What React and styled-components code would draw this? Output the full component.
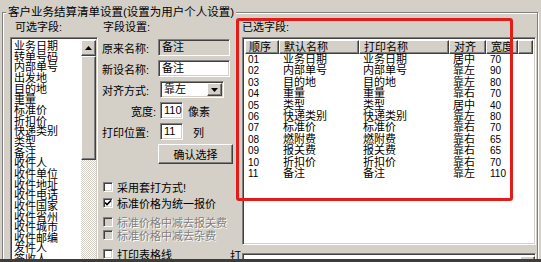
import styled, { createGlobalStyle, css } from 'styled-components';

const GlobalStyle = createGlobalStyle`
  html, body {
    margin: 0;
    padding: 0;
    background: #d4d0c8;
  }
  body {
    font-family: 'Liberation Sans', 'Noto Sans CJK SC', sans-serif;
    font-size: 11px;
    color: #000;
  }
`;

const sunken = css`
  box-sizing: border-box;
  border: 1px solid;
  border-color: #808080 #fff #fff #808080;
  box-shadow: inset 1px 1px 0 #404040, inset -1px -1px 0 #d4d0c8;
`;

const raised = css`
  box-sizing: border-box;
  border: 1px solid;
  border-color: #fff #404040 #404040 #fff;
  box-shadow: inset -1px -1px 0 #808080;
  background: #d4d0c8;
`;

const Window = styled.div`
  position: relative;
  width: 541px;
  height: 262px;
  box-sizing: border-box;
  padding: 5px 3px 0 2px;
  overflow: hidden;
  background: #d4d0c8;
  border-bottom: 3px solid #3c3c3c;
`;

const Group = styled.fieldset`
  margin: 0;
  min-width: 0;
  height: 300px;
  padding: 0 1px 0 7px;
  border: 1px solid #808080;
  box-shadow: inset 1px 1px 0 #fff, 1px 1px 0 #fff;
`;

const Legend = styled.legend`
  margin-left: -4px;
  padding: 0 2px;
  font-size: 11.5px;
  line-height: 14px;
  background: #d4d0c8;
`;

const Columns = styled.div`
  display: flex;
  align-items: flex-start;
`;

const LeftCol = styled.div`
  width: 88px;
  padding-top: 1px;
`;

const Caption = styled.div`
  line-height: 14px;
  padding-left: ${(p) => p.$indent || 0}px;
  margin-top: ${(p) => p.$mt || 0}px;
  white-space: nowrap;
`;

const ListBox = styled.div`
  ${sunken};
  display: flex;
  margin-top: 3px;
  height: 240px;
  padding: 2px 1px 2px 2px;
  background: #fff;
`;

const Items = styled.div`
  flex: 1;
  padding: 1px 0 0 1px;
  line-height: 10.65px;
  white-space: nowrap;
  overflow: hidden;
`;

const ScrollBar = styled.div`
  width: 15px;
  display: flex;
  flex-direction: column;
`;

const ScrollBtn = styled.div`
  ${raised};
  height: 16px;
  display: flex;
  align-items: center;
  justify-content: center;
`;

const Thumb = styled.div`
  ${raised};
  height: 104px;
`;

const Track = styled.div`
  flex: 1;
  background: repeating-conic-gradient(#d4d0c8 0 25%, #fff 0 50%) 0 0 / 2px 2px;
`;

const MidCol = styled.div`
  width: 128px;
  margin-left: 4px;
  padding-top: 1px;
`;

const Form = styled.div`
  margin-top: 5px;
  display: flex;
  flex-direction: column;
  gap: 4px;
`;

const FormRow = styled.div`
  display: flex;
  align-items: center;
  height: 17px;
  white-space: nowrap;
`;

const Label = styled.span`
  width: 58px;
  box-sizing: border-box;
  text-align: ${(p) => (p.$right ? 'right' : 'left')};
  padding-right: ${(p) => (p.$right ? 4 : 0)}px;
`;

const Field = styled.div`
  ${sunken};
  width: ${(p) => p.$w}px;
  height: 17px;
  flex: none;
  padding: 0 3px;
  line-height: 15px;
  background: ${(p) => (p.$readOnly ? '#d4d0c8' : '#fff')};
  display: flex;
  align-items: center;
  justify-content: space-between;
`;

const DropBtn = styled.div`
  ${raised};
  width: 15px;
  height: 13px;
  margin-right: -2px;
  display: flex;
  align-items: center;
  justify-content: center;
`;

const Unit = styled.span`
  margin-left: ${(p) => p.$gap}px;
`;

const Button = styled.div`
  ${raised};
  margin: 4px 0 0 56px;
  width: 75px;
  height: 20px;
  display: flex;
  align-items: center;
  justify-content: center;
`;

const CheckRow = styled.div`
  display: flex;
  align-items: center;
  height: 13px;
  margin-top: ${(p) => p.$mt}px;
  padding-left: 1px;
  white-space: nowrap;
  color: ${(p) => (p.$disabled ? '#808080' : '#000')};
  text-shadow: ${(p) => (p.$disabled ? '1px 1px 0 #fff' : 'none')};
`;

const Box = styled.span`
  ${sunken};
  width: 10px;
  height: 10px;
  margin-right: 4px;
  background: ${(p) => (p.$disabled ? '#d4d0c8' : '#fff')};
  display: flex;
  align-items: center;
  justify-content: center;
`;

const RightCol = styled.div`
  position: relative;
  flex: 1;
  padding-top: 1px;
  display: grid;
  grid-template-columns: 12px 1fr;
`;

const ListView = styled.div`
  ${sunken};
  grid-column: 2;
  margin-top: 3px;
  height: 208px;
  padding: 2px;
  background: #fff;
`;

const Row = styled.div`
  display: grid;
  grid-template-columns: 34px 80px 90px 37px 32px 1fr;
  height: ${(p) => (p.$head ? 14 : 11.4)}px;
  line-height: ${(p) => (p.$head ? 12 : 11.4)}px;
  white-space: nowrap;
`;

const HeadCell = styled.div`
  ${raised};
  padding-left: ${(p) => (p.$first ? 3 : 4)}px;
`;

const Cell = styled.div`
  padding-left: ${(p) => (p.$first ? 3 : 4)}px;
  font-size: ${(p) => (p.$num ? 10 : 11)}px;
`;

const Bottom = styled.div`
  grid-column: 1 / 3;
  display: grid;
  grid-template-columns: 12px 1fr;
  margin-top: 8px;
`;

const Combo = styled.div`
  ${sunken};
  height: 18px;
  background: #fff;
  display: flex;
  justify-content: flex-end;
  padding: 2px;
`;

const Mark = styled.div`
  position: absolute;
  left: 6px;
  top: -1px;
  width: 277px;
  height: 183px;
  box-sizing: border-box;
  border: 3px solid #e41c17;
  border-radius: 3px;
  pointer-events: none;
`;

const fields = [
  '业务日期', '转单号码', '内部单号', '出发地', '目的地', '重量', '标准价', '折扣价',
  '快递类别', '类型', '备注', '收件人', '收件单位', '收件地址', '收件电话', '收件国家',
  '收件省州', '收件城市', '收件邮编', '发件人', '签收人', '签收时间',
];

const selected = [
  ['01', '业务日期', '居中', '70'],
  ['02', '内部单号', '靠左', '90'],
  ['03', '目的地', '靠左', '80'],
  ['04', '重量', '靠右', '70'],
  ['05', '类型', '居中', '40'],
  ['06', '快递类别', '靠左', '80'],
  ['07', '标准价', '靠右', '70'],
  ['08', '燃附费', '靠右', '65'],
  ['09', '报关费', '靠右', '65'],
  ['10', '折扣价', '靠右', '70'],
  ['11', '备注', '靠左', '110'],
];

const checks = [
  { text: '采用套打方式!', mt: 16 },
  { text: '标准价格为统一报价', mt: 3, checked: true },
  { text: '标准价格中减去报关费', mt: 6, disabled: true },
  { text: '标准价格中减去杂费', mt: 0, disabled: true },
  { text: '打印表格线', mt: 6 },
];

const Arrow = ({ up }) => (
  <svg width="7" height="4" viewBox="0 0 7 4">
    <path d={up ? 'M3.5 0 L7 4 L0 4 Z' : 'M0 0 L7 0 L3.5 4 Z'} fill="#000" />
  </svg>
);

const Tick = () => (
  <svg width="8" height="8" viewBox="0 0 8 8">
    <path d="M1 3.5 L3 5.5 L7 1.5" fill="none" stroke="#000" strokeWidth="1.6" />
  </svg>
);

export default function App() {
  return (
    <>
      <GlobalStyle />
      <Window>
        <Group>
          <Legend>客户业务结算清单设置(设置为用户个人设置)</Legend>
          <Columns>
            <LeftCol>
              <Caption $indent={5}>可选字段:</Caption>
              <ListBox>
                <Items>
                  {fields.map((f) => (
                    <div key={f}>{f}</div>
                  ))}
                </Items>
                <ScrollBar>
                  <ScrollBtn>
                    <Arrow up />
                  </ScrollBtn>
                  <Thumb />
                  <Track />
                </ScrollBar>
              </ListBox>
            </LeftCol>

            <MidCol>
              <Caption $indent={1}>字段设置:</Caption>
              <Form>
                <FormRow>
                  <Label>原来名称:</Label>
                  <Field $w={72} $readOnly>备注</Field>
                </FormRow>
                <FormRow>
                  <Label>新设名称:</Label>
                  <Field $w={72}>备注</Field>
                </FormRow>
                <FormRow>
                  <Label>对齐方式:</Label>
                  <Field $w={64}>
                    靠左
                    <DropBtn>
                      <Arrow />
                    </DropBtn>
                  </Field>
                </FormRow>
                <FormRow>
                  <Label $right>宽度:</Label>
                  <Field $w={23}>110</Field>
                  <Unit $gap={5}>像素</Unit>
                </FormRow>
                <FormRow>
                  <Label>打印位置:</Label>
                  <Field $w={23}>11</Field>
                  <Unit $gap={10}>列</Unit>
                </FormRow>
              </Form>
              <Button>确认选择</Button>
              {checks.map((c) => (
                <CheckRow key={c.text} $mt={c.mt} $disabled={c.disabled}>
                  <Box $disabled={c.disabled}>{c.checked && <Tick />}</Box>
                  {c.text}
                </CheckRow>
              ))}
            </MidCol>

            <RightCol>
              <div />
              <Caption>已选字段:</Caption>
              <ListView>
                <Row $head>
                  <HeadCell $first>顺序</HeadCell>
                  <HeadCell>默认名称</HeadCell>
                  <HeadCell>打印名称</HeadCell>
                  <HeadCell>对齐</HeadCell>
                  <HeadCell>宽度</HeadCell>
                  <HeadCell />
                </Row>
                {selected.map(([no, name, align, width]) => (
                  <Row key={no}>
                    <Cell $first $num>{no}</Cell>
                    <Cell>{name}</Cell>
                    <Cell>{name}</Cell>
                    <Cell>{align}</Cell>
                    <Cell $num>{width}</Cell>
                  </Row>
                ))}
              </ListView>
              <Bottom>
                <Caption $mt={-4}>打</Caption>
                <Combo>
                  <DropBtn>
                    <Arrow />
                  </DropBtn>
                </Combo>
              </Bottom>
              <Mark />
            </RightCol>
          </Columns>
        </Group>
      </Window>
    </>
  );
}
